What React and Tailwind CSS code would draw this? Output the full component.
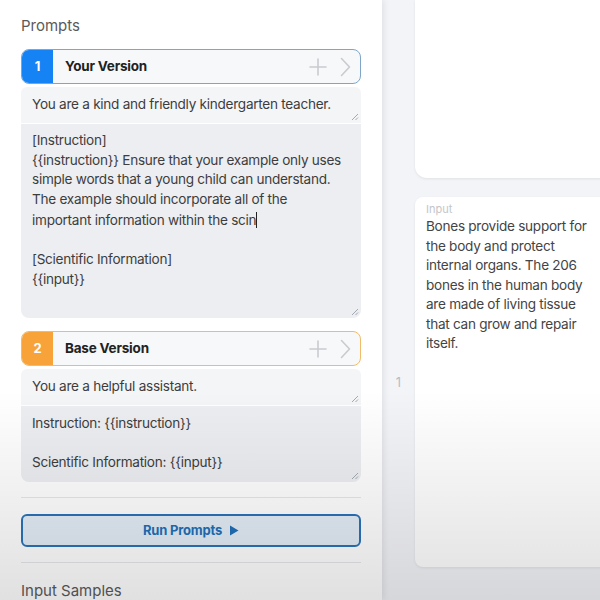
const font = { fontFamily: 'Inter, "Noto Sans", sans-serif' };

function Resize() {
  return (
    <svg className="absolute bottom-[2px] right-[2px]" width="8" height="8" viewBox="0 0 8 8">
      <path d="M7 1 L1 7 M7 4.5 L4.5 7" stroke="#9aa0a8" strokeWidth="0.9" />
    </svg>
  );
}

function PromptHeader({ num, title, badge, border }) {
  return (
    <div className={`flex h-[35px] items-stretch overflow-hidden rounded-lg border bg-[#f7f8fa] ${border}`}>
      <div className={`flex w-[31px] items-center justify-center text-[13px] font-bold text-white ${badge}`}>{num}</div>
      <div className="flex flex-1 items-center pl-[12px] text-[13.5px] font-bold tracking-[-0.2px] text-[#222]">{title}</div>
      <div className="flex items-center gap-[13px] pr-[9px]">
        <svg width="18" height="18" viewBox="0 0 18 18">
          <path d="M9 1 V17 M1 9 H17" stroke="#c9cbcf" strokeWidth="1.6" strokeLinecap="round" />
        </svg>
        <svg width="11" height="20" viewBox="0 0 11 20">
          <path d="M1.5 1.5 L9.5 10 L1.5 18.5" fill="none" stroke="#c9cbcf" strokeWidth="1.6" strokeLinecap="round" strokeLinejoin="round" />
        </svg>
      </div>
    </div>
  );
}

const body = 'text-[13.6px] leading-[19.5px] tracking-[-0.28px] text-[#3d3d3d]';

export default function App() {
  return (
    <div className="relative flex h-[600px] w-[600px] overflow-hidden bg-white" style={font}>
      <div className="z-10 w-[382px] shrink-0 bg-white px-[21px] pt-[16px] shadow-[2px_0_6px_rgba(0,0,0,0.08)]">
        <h2 className="text-[15px] leading-[20px] text-[#5a5a5a]">Prompts</h2>

        <div className="mt-[13px]">
          <PromptHeader num="1" title="Your Version" badge="bg-[#1683f5]" border="border-[#7fa6c9]" />
          <div className={`relative mt-[3px] h-[36px] rounded-t-md bg-[#f4f5f7] px-[11px] pt-[8px] ${body}`}>
            You are a kind and friendly kindergarten teacher.
            <Resize />
          </div>
          <div className={`relative mt-px h-[194px] rounded-b-lg bg-[#eceef2] px-[11px] pt-[7px] ${body}`}>
            <div>[Instruction]</div>
            <div>{'{{instruction}}'} Ensure that your example only uses</div>
            <div>simple words that a young child can understand.</div>
            <div>The example should incorporate all of the</div>
            <div>
              important information within the scin<span className="inline-block h-[16px] w-px translate-y-[3px] bg-[#222]" />
            </div>
            <div className="h-[19.5px]" />
            <div>[Scientific Information]</div>
            <div>{'{{input}}'}</div>
            <Resize />
          </div>
        </div>

        <div className="mt-[13px]">
          <PromptHeader num="2" title="Base Version" badge="bg-[#f7a33a]" border="border-[#f0bc6a]" />
          <div className={`relative mt-[3px] h-[36px] rounded-t-md bg-[#f4f5f7] px-[11px] pt-[8px] ${body}`}>
            You are a helpful assistant.
            <Resize />
          </div>
          <div className={`relative mt-px h-[76px] rounded-b-lg bg-[#eceef2] px-[11px] pt-[8px] ${body}`}>
            <div>Instruction: {'{{instruction}}'}</div>
            <div className="h-[19.5px]" />
            <div>Scientific Information: {'{{input}}'}</div>
            <Resize />
          </div>
        </div>

        <div className="mt-[15px] border-t border-[#e6e7ea]" />
        <button className="mt-[16px] flex h-[33px] w-full items-center justify-center gap-[7px] rounded-md border-2 border-[#2a73ba] bg-[#e3edf6] text-[13px] font-bold tracking-[-0.2px] text-[#1f6fb8]">
          Run Prompts
          <svg width="10" height="11" viewBox="0 0 10 11">
            <path d="M1 0.5 L9.5 5.5 L1 10.5 Z" fill="#1f6fb8" />
          </svg>
        </button>
        <div className="mt-[15px] border-t border-[#e6e7ea]" />
        <h2 className="mt-[18px] text-[15px] leading-[20px] text-[#5a5a5a]">Input Samples</h2>
      </div>

      <div className="flex flex-1 bg-[#f3f4f8]">
        <div className="flex w-[33px] shrink-0 flex-col pt-[373px] text-center text-[13px] text-[#b8bcc3]">1</div>
        <div className="flex flex-1 flex-col">
          <div className="h-[178px] rounded-bl-xl bg-white shadow-[0_1px_3px_rgba(0,0,0,0.08)]" />
          <div className="mt-[19px] h-[370px] rounded-l-lg bg-white px-[11px] pt-[4px] shadow-[0_1px_3px_rgba(0,0,0,0.08)]">
            <div className="text-[11px] leading-[16px] text-[#c4c6ca]">Input</div>
            <p className="w-[165px] text-[13.6px] leading-[19.5px] tracking-[-0.28px] text-[#444]">
              Bones provide support for the body and protect internal organs. The 206 bones in the human body are made of living tissue that can grow and repair itself.
            </p>
          </div>
        </div>
      </div>

      <div className="pointer-events-none absolute inset-0 z-20 bg-gradient-to-b from-transparent from-65% to-black/12" />
    </div>
  );
}
